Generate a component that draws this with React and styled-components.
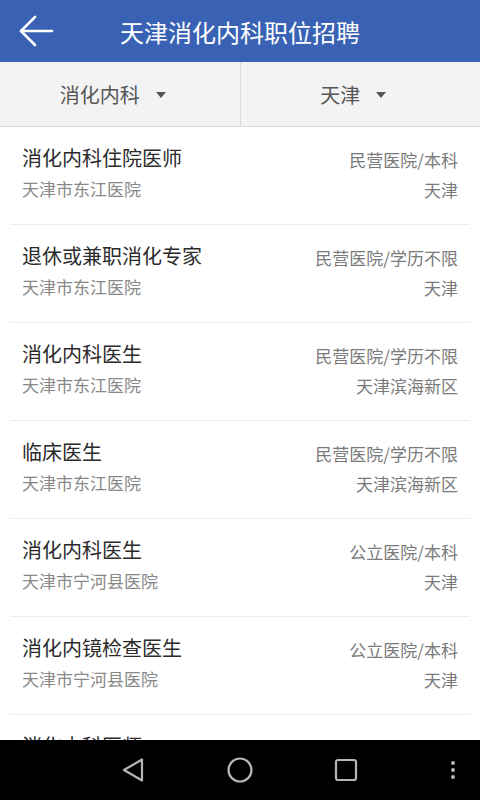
import React from 'react';
import styled, { createGlobalStyle } from 'styled-components';

const GlobalStyle = createGlobalStyle`
html, body {
  margin: 0;
  padding: 0;
  background: #ffffff;
}
* {
  box-sizing: border-box;
}
`

const ContainerPagina = styled.div`
display: flex;
flex-direction: column;
width: 480px;
height: 800px;
overflow: hidden;
font-family: "Noto Sans CJK SC", "Noto Sans", sans-serif;
background: #ffffff;
`

const Header = styled.header`
display: flex;
align-items: center;
height: 62px;
flex-shrink: 0;
background-color: #3962b5;
color: white;
`

const BackButton = styled.div`
display: flex;
align-items: center;
justify-content: center;
width: 72px;
height: 62px;
`

const HeaderTitle = styled.h1`
flex: 1;
margin: 0 72px 0 0;
text-align: center;
font-size: 24px;
font-weight: 400;
`

const FilterBar = styled.div`
display: flex;
height: 65px;
flex-shrink: 0;
background: #f3f3f3;
border-bottom: 1px solid #dcdcdc;
`

const FilterItem = styled.div`
flex: 1;
display: flex;
align-items: center;
justify-content: center;
gap: 16px;
padding-right: 14px;
font-size: 20px;
color: #555;
border-right: ${props => (props.last ? 'none' : '1px solid #dadada')};
`

const Caret = styled.span`
width: 0;
height: 0;
border-left: 5px solid transparent;
border-right: 5px solid transparent;
border-top: 6px solid #555;
margin-top: 2px;
`

const Lista = styled.div`
flex: 1;
overflow: hidden;
`

const Row = styled.div`
display: flex;
flex-direction: column;
gap: 5px;
height: 98px;
margin: 0 10px;
padding: 17px 12px 0;
border-bottom: 1px solid #ececec;
`

const Line = styled.div`
display: flex;
justify-content: space-between;
align-items: center;
height: 26px;
`

const JobTitle = styled.span`
font-size: 20px;
color: #2b2b2b;
`

const Hospital = styled.span`
font-size: 17px;
color: #888;
`

const Meta = styled.span`
font-size: 17px;
color: #7a7a7a;
margin-top: ${props => (props.top ? '4px' : '2px')};
`

const NavBar = styled.div`
display: flex;
align-items: center;
height: 60px;
flex-shrink: 0;
background: #000;
padding: 0 15px 0 120px;
`

const NavSlot = styled.div`
display: flex;
align-items: center;
justify-content: center;
flex-shrink: 0;
width: ${props => props.w}px;
margin-left: ${props => (props.end ? 'auto' : '0')};
`

const jobs = [
  { title: '消化内科住院医师', hospital: '天津市东江医院', type: '民营医院/本科', city: '天津' },
  { title: '退休或兼职消化专家', hospital: '天津市东江医院', type: '民营医院/学历不限', city: '天津' },
  { title: '消化内科医生', hospital: '天津市东江医院', type: '民营医院/学历不限', city: '天津滨海新区' },
  { title: '临床医生', hospital: '天津市东江医院', type: '民营医院/学历不限', city: '天津滨海新区' },
  { title: '消化内科医生', hospital: '天津市宁河县医院', type: '公立医院/本科', city: '天津' },
  { title: '消化内镜检查医生', hospital: '天津市宁河县医院', type: '公立医院/本科', city: '天津' },
  { title: '消化内科医师', hospital: '天津市宁河县医院', type: '公立医院/本科', city: '天津' },
]

export default class App extends React.Component {
  render() {
    return (
      <ContainerPagina>
        <GlobalStyle />
        <Header>
          <BackButton>
            <svg width="36" height="34" viewBox="0 0 36 34" fill="none" stroke="#fff" strokeWidth="2.6" strokeLinecap="round" strokeLinejoin="round">
              <path d="M3 17 H34" />
              <path d="M17 3 L3 17 L17 31" />
            </svg>
          </BackButton>
          <HeaderTitle>天津消化内科职位招聘</HeaderTitle>
        </Header>

        <FilterBar>
          <FilterItem>
            消化内科 <Caret />
          </FilterItem>
          <FilterItem last>
            天津 <Caret />
          </FilterItem>
        </FilterBar>

        <Lista>
          {jobs.map((job, i) => (
            <Row key={i}>
              <Line>
                <JobTitle>{job.title}</JobTitle>
                <Meta top>{job.type}</Meta>
              </Line>
              <Line>
                <Hospital>{job.hospital}</Hospital>
                <Meta>{job.city}</Meta>
              </Line>
            </Row>
          ))}
        </Lista>

        <NavBar>
          <NavSlot w={26}>
            <svg width="24" height="26" viewBox="0 0 24 26" fill="none" stroke="#b5b5b5" strokeWidth="2.2" strokeLinejoin="round">
              <path d="M3 13 L21 2.5 V23.5 Z" />
            </svg>
          </NavSlot>
          <NavSlot w={188}>
            <svg width="28" height="28" viewBox="0 0 28 28" fill="none" stroke="#b5b5b5" strokeWidth="2.2">
              <circle cx="14" cy="14" r="11.5" />
            </svg>
          </NavSlot>
          <NavSlot w={24}>
            <svg width="24" height="24" viewBox="0 0 24 24" fill="none" stroke="#b5b5b5" strokeWidth="2.2">
              <rect x="2" y="2" width="20" height="20" rx="2" />
            </svg>
          </NavSlot>
          <NavSlot w={24} end>
            <svg width="8" height="20" viewBox="0 0 8 20" fill="#b5b5b5">
              <circle cx="4" cy="3" r="2" />
              <circle cx="4" cy="10" r="2" />
              <circle cx="4" cy="17" r="2" />
            </svg>
          </NavSlot>
        </NavBar>
      </ContainerPagina>
    );
  }
}
